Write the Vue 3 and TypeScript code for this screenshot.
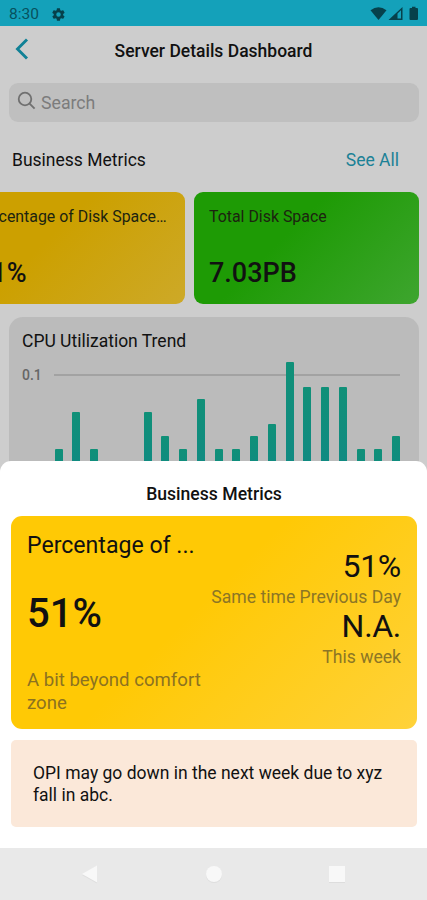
<script setup lang="ts">
interface Metric {
  title: string
  value: string
  tone: 'amber' | 'green'
}

const metrics: Metric[] = [
  { title: 'Percentage of Disk Space…', value: '51%', tone: 'amber' },
  { title: 'Total Disk Space', value: '7.03PB', tone: 'green' },
]

const unit = 12.35
const samples: number[] = [1, 4, 1, 0, 0, 4, 2, 1, 5, 1, 1, 2, 3, 8, 6, 6, 6, 1, 1, 2]
const barHeight = (n: number): string => (n ? `${n * unit + 20}px` : '0')
</script>

<template>
  <div class="phone">
    <div class="screen">
      <div class="status">
        <span class="clock">8:30</span>
        <svg class="gear" viewBox="0 0 24 24"><path fill-rule="evenodd" d="M19.4 13a7.500 7.500 0 0 0 0-2l2.100-1.600a.5.5 0 0 0 .1-.7l-2-3.400a.5.5 0 0 0-.6-.2l-2.500 1a7 7 0 0 0-1.700-1l-.4-2.600a.5.5 0 0 0-.5-.5h-4a.5.5 0 0 0-.5.5L9 5.100a7 7 0 0 0-1.700 1l-2.500-1a.5.5 0 0 0-.6.2l-2 3.400c-.1.200-.1.500.1.700L4.500 11a7.500 7.500 0 0 0 0 2l-2.200 1.600a.5.5 0 0 0-.1.700l2 3.400c.1.200.4.300.6.200l2.500-1a7 7 0 0 0 1.700 1l.4 2.600c0 .3.200.5.500.5h4c.3 0 .5-.2.500-.5l.4-2.600a7 7 0 0 0 1.700-1l2.500 1c.2.100.5 0 .6-.2l2-3.400a.5.5 0 0 0-.1-.7zM12 15.600a3.600 3.600 0 1 1 0-7.200 3.600 3.600 0 0 1 0 7.200z" /></svg>
        <svg class="signals" viewBox="0 0 50 16">
          <path d="M0.500 4.300Q8.500-1.800 16.500 4.300L8.500 14z" />
          <path fill-rule="evenodd" d="M18.500 14L32.500 1V14zM27.500 7.500V12.500H31V4.300z" />
          <path d="M40.500 2H42V.7H45.500V2H47Q48 2 48 3V13Q48 14 47 14H40.500Q39.500 14 39.500 13V3Q39.500 2 40.500 2z" />
        </svg>
      </div>

      <header class="bar">
        <svg class="back" viewBox="0 0 14 22"><path d="M12 1.500L2.500 11L12 20.500" /></svg>
        <h1>Server Details Dashboard</h1>
      </header>

      <div class="search">
        <svg viewBox="0 0 20 20"><circle cx="8" cy="8" r="6.300" /><path d="M12.600 12.600L17.600 17.600" /></svg>
        <span>Search</span>
      </div>

      <div class="section-head">
        <h2>Business Metrics</h2>
        <a>See All</a>
      </div>

      <div class="cards">
        <article v-for="m in metrics" :key="m.title" class="card" :class="m.tone">
          <p class="card-title">{{ m.title }}</p>
          <p class="card-value">{{ m.value }}</p>
        </article>
      </div>

      <section class="chart">
        <h2>CPU Utilization Trend</h2>
        <div class="axis"><span>0.1</span><i></i></div>
        <div class="bars">
          <div v-for="(n, i) in samples" :key="i" class="col" :style="{ height: barHeight(n) }"></div>
        </div>
      </section>
    </div>

    <div class="sheet">
      <h3>Business Metrics</h3>
      <article class="detail">
        <div class="left">
          <p class="name">Percentage of ...</p>
          <p class="big">51%</p>
          <p class="note">A bit beyond comfort<br />zone</p>
        </div>
        <div class="right">
          <p class="num">51%</p>
          <p class="label">Same time Previous Day</p>
          <p class="num">N.A.</p>
          <p class="label">This week</p>
        </div>
      </article>
      <p class="tip">OPI may go down in the next week due to xyz fall in abc.</p>
      <nav class="nav">
        <svg viewBox="0 0 18 20"><path d="M1 10L16 1.500V18.500z" /></svg>
        <svg viewBox="0 0 18 20"><circle cx="9" cy="10" r="8" /></svg>
        <svg viewBox="0 0 18 20"><rect x="1" y="2" width="16" height="16" /></svg>
      </nav>
    </div>
  </div>
</template>

<style>
body {
  margin: 0;
}
</style>

<style scoped>
* {
  box-sizing: border-box;
}
h1, h2, h3, p {
  margin: 0;
  font-weight: 400;
  white-space: nowrap;
}
svg {
  display: block;
}
.phone {
  position: relative;
  width: 427px;
  height: 900px;
  overflow: hidden;
  background: #cdcdcd;
  font-family: Roboto, 'Liberation Sans', sans-serif;
  color: #111;
}
.screen {
  height: 480px;
  overflow: hidden;
}
.status {
  display: flex;
  align-items: center;
  height: 26px;
  padding: 2px 7px 0 9px;
  background: #14a1ba;
  color: #07515e;
}
.clock {
  width: 42px;
  font-size: 15.500px;
}
.gear {
  width: 15px;
  height: 15px;
  fill: #06414b;
}
.signals {
  width: 50px;
  height: 16px;
  margin-left: auto;
  fill: #06414b;
}
.bar {
  position: relative;
  display: flex;
  align-items: center;
  justify-content: center;
  height: 57px;
  padding-bottom: 8px;
}
.back {
  position: absolute;
  left: 15px;
  top: 12px;
  width: 14px;
  height: 22px;
  fill: none;
  stroke: #108196;
  stroke-width: 2.900;
}
h1 {
  font-size: 17.500px;
  font-weight: 500;
}
.search {
  display: flex;
  align-items: center;
  height: 39px;
  margin: 0 8px 0 9px;
  padding-left: 8px;
  border-radius: 9px;
  background: #bfbfbf;
  color: #7c7c7c;
  font-size: 17.700px;
}
.search svg {
  width: 20px;
  height: 20px;
  margin: -4px 4px 0 0;
  fill: none;
  stroke: #707070;
  stroke-width: 1.800;
}
.section-head {
  display: flex;
  align-items: center;
  justify-content: space-between;
  height: 70px;
  padding: 5px 28px 0 12px;
  font-size: 17.500px;
}
.section-head h2,
.chart h2 {
  font-size: 17.500px;
}
.section-head a {
  color: #1b8196;
}
.cards {
  display: flex;
  justify-content: flex-end;
  gap: 9px;
  height: 112px;
  padding-right: 8px;
}
.card {
  flex: 0 0 225px;
  padding: 15px 0 0 15px;
  border-radius: 9px;
}
.amber {
  background: linear-gradient(135deg, #cca000 0%, #cca000 40%, #cda928 100%);
}
.amber .card-value {
  margin-left: 1px;
}
.green {
  background: linear-gradient(135deg, #1e9b05 0%, #1e9b05 40%, #3ea52f 100%);
}
.card-title {
  font-size: 15.900px;
  line-height: 20px;
  color: #1c2410;
}
.card-value {
  margin-top: 28px;
  font-size: 27px;
  line-height: 36px;
  font-weight: 500;
}
.chart {
  height: 200px;
  margin: 13px 8px 0 9px;
  padding: 12px 19px 0 13px;
  border-radius: 14px;
  background: #bbb;
}
.chart h2 {
  line-height: 25px;
}
.axis {
  display: flex;
  align-items: center;
  gap: 12px;
  height: 18px;
  margin-top: 12px;
  color: #666;
  font-size: 14px;
  font-weight: 500;
}
.axis i {
  flex: 1;
  height: 2px;
  background: #a2a2a2;
}
.axis span {
  width: 20px;
}
.bars {
  display: flex;
  align-items: flex-end;
  justify-content: space-between;
  height: 120px;
  margin: -23px -0.500px 0 32.700px;
}
.col {
  width: 8px;
  border-radius: 1px 1px 0 0;
  background: linear-gradient(#109078, #108984);
}
.sheet {
  position: absolute;
  left: 0;
  right: 0;
  bottom: 0;
  height: 439px;
  display: flex;
  flex-direction: column;
  border-radius: 11px 11px 0 0;
  background: #fff;
}
h3 {
  height: 55px;
  padding: 22px 0 0 1px;
  text-align: center;
  font-size: 17.600px;
  line-height: 23px;
  font-weight: 500;
}
.detail {
  display: flex;
  justify-content: space-between;
  height: 213px;
  margin: 0 10px 0 11px;
  padding: 14px 16px 0 16px;
  border-radius: 11px;
  background: linear-gradient(135deg, #ffc905 0%, #ffc905 45%, #ffd23a 100%);
}
.name {
  height: 33px;
  font-size: 23.100px;
  line-height: 32px;
}
.big {
  margin-top: 27px;
  font-size: 40px;
  line-height: 48px;
  font-weight: 500;
}
.note {
  margin-top: 31px;
  font-size: 18.600px;
  line-height: 23px;
  color: #8c7220;
}
.right {
  padding-top: 18px;
  text-align: right;
}
.num {
  height: 36px;
  font-size: 32px;
  line-height: 36px;
  letter-spacing: -0.300px;
}
.label {
  height: 24px;
  font-size: 17.600px;
  line-height: 27px;
  color: #8c7625;
}
.tip {
  height: 87px;
  margin: 11px 10px 0 11px;
  padding: 22px 30px 0 22px;
  border-radius: 5px;
  background: #fbe8d9;
  font-size: 17.500px;
  line-height: 22px;
  white-space: normal;
}
.nav {
  display: flex;
  justify-content: space-between;
  height: 52px;
  margin-top: auto;
  padding: 16px 81px 0;
  background: #e9e9e9;
}
.nav svg {
  width: 18px;
  height: 20px;
  fill: #f8f8f8;
  filter: drop-shadow(0 1px 0.500px #ddd);
}
</style>
